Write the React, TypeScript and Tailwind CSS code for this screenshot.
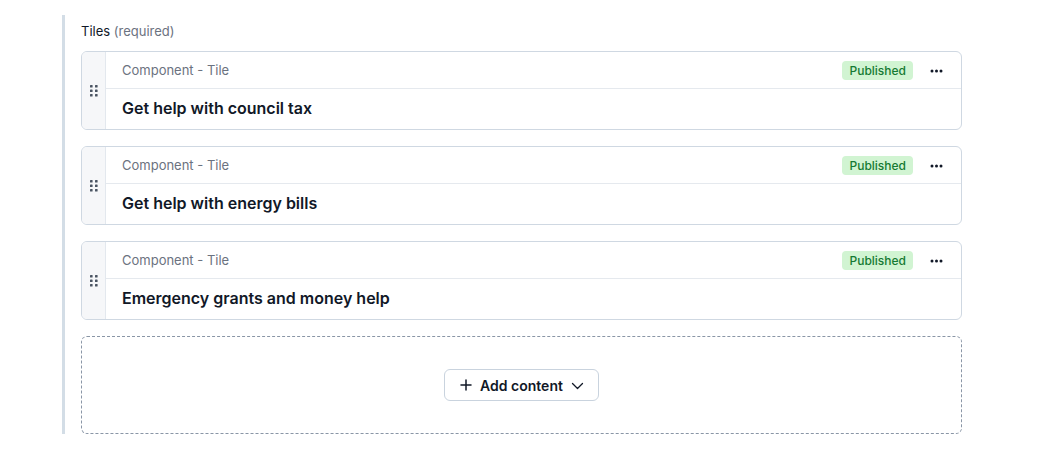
import React from "react";

function GripIcon() {
  return (
    <svg width="8" height="12" viewBox="0 0 8 12" fill="#4b5563">
      <rect x="0" y="0" width="2.6" height="2.6" rx="0.6" />
      <rect x="5" y="0" width="2.6" height="2.6" rx="0.6" />
      <rect x="0" y="4.5" width="2.6" height="2.6" rx="0.6" />
      <rect x="5" y="4.5" width="2.6" height="2.6" rx="0.6" />
      <rect x="0" y="9" width="2.6" height="2.6" rx="0.6" />
      <rect x="5" y="9" width="2.6" height="2.6" rx="0.6" />
    </svg>
  );
}

function DotsIcon() {
  return (
    <svg width="13" height="4" viewBox="0 0 13 4" fill="#111827">
      <circle cx="2" cy="2" r="1.5" />
      <circle cx="6.5" cy="2" r="1.5" />
      <circle cx="11" cy="2" r="1.5" />
    </svg>
  );
}

function Tile({ title }: { title: string }) {
  return (
    <div className="flex rounded-md border border-[#cfd8e2] bg-white overflow-hidden">
      <div className="w-[24px] shrink-0 bg-[#f6f7f9] border-r border-[#e3e8ee] flex items-center justify-center">
        <GripIcon />
      </div>
      <div className="flex-1 min-w-0">
        <div className="h-[37px] flex items-center justify-between pl-4 pr-[18px] pt-[1px] border-b border-[#e5e9ee]">
          <span className="text-[13px] text-[#6b7280]">Component - Tile</span>
          <div className="flex items-center gap-[17px]">
            <span className="h-[19px] px-[7px] rounded-[4px] bg-[#d1f4d2] text-[#167a33] text-[12px] font-medium leading-[19px]">Published</span>
            <DotsIcon />
          </div>
        </div>
        <div className="h-[40px] flex items-center pl-4 pb-[2px]">
          <span className="text-[16px] font-semibold text-[#111827]">{title}</span>
        </div>
      </div>
    </div>
  );
}

export default function App() {
  return (
    <div className="w-[1040px] h-[469px] bg-white" style={{ fontFamily: "Inter, 'Noto Sans', sans-serif" }}>
      <div className="pt-[15px] pl-[62px]">
        <div className="w-[900px] border-l-[3px] border-[#d3dde6] pl-4 pt-[6px]">
          <div className="text-[13px] leading-[20px] text-[#111827] mb-[10px]">
            Tiles <span className="text-[#6b7280]">(required)</span>
          </div>
          <div className="flex flex-col gap-4">
            <Tile title="Get help with council tax" />
            <Tile title="Get help with energy bills" />
            <Tile title="Emergency grants and money help" />
            <div className="h-[98px] rounded-md border border-dashed border-[#8a96a6] flex items-center justify-center">
              <button className="h-[32px] pl-[15px] pr-[14px] flex items-center gap-[8px] rounded-md border border-[#c9d3de] bg-white text-[14px] font-semibold text-[#111827]">
                <svg width="12" height="12" viewBox="0 0 12 12" stroke="#111827" strokeWidth="1.5" strokeLinecap="round">
                  <path d="M6 1v10M1 6h10" />
                </svg>
                <span>Add content</span>
                <svg width="13" height="13" viewBox="0 0 13 13" fill="none" stroke="#111827" strokeWidth="1.3" strokeLinecap="round" strokeLinejoin="round">
                  <path d="M1.5 4.5 6.5 9.5l5-5" />
                </svg>
              </button>
            </div>
          </div>
        </div>
      </div>
    </div>
  );
}
